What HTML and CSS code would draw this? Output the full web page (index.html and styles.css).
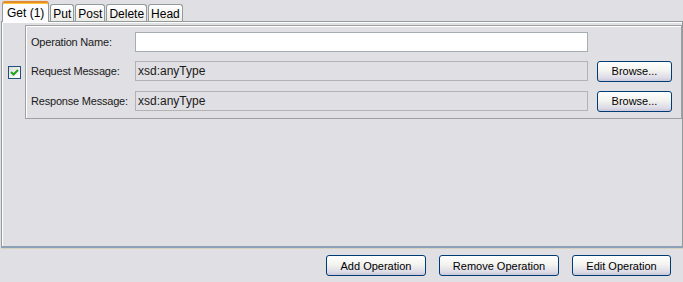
FILE: index.html
```html
<!DOCTYPE html>
<html lang="en">
<head>
    <meta charset="UTF-8">
    <title>Operations</title>
    <link rel="stylesheet" href="styles.css">
</head>
<body>
    <div class="tab-strip">
        <div class="tab selected">Get (1)</div>
        <div class="tab">Put</div>
        <div class="tab">Post</div>
        <div class="tab">Delete</div>
        <div class="tab">Head</div>
    </div>

    <div class="tab-body">
        <div class="op-row">
            <div class="check-col">
                <span class="check">
                    <svg width="11" height="11" viewBox="0 0 11 11">
                        <path d="M2 5 L4.5 7.5 L9 3" fill="none" stroke="#21a121" stroke-width="2"/>
                    </svg>
                </span>
            </div>
            <div class="op-panel">
                <label>Operation Name:</label>
                <div class="field"></div>
                <div></div>

                <label>Request Message:</label>
                <div class="field disabled">xsd:anyType</div>
                <button class="btn">Browse...</button>

                <label>Response Message:</label>
                <div class="field disabled">xsd:anyType</div>
                <button class="btn">Browse...</button>
            </div>
        </div>
    </div>

    <div class="actions">
        <button class="btn add">Add Operation</button>
        <button class="btn remove">Remove Operation</button>
        <button class="btn edit">Edit Operation</button>
    </div>
</body>
</html>
```

FILE: styles.css
```css
body {
    margin: 0;
    padding: 0;
    width: 683px;
    height: 282px;
    background-color: #e0dfe3;
    color: #000;
    font-family: "Liberation Sans", Arial, sans-serif;
    font-size: 11px;
    overflow: hidden;
}

.tab-strip {
    display: flex;
    align-items: flex-end;
    height: 21px;
    padding-left: 2px;
}

.tab {
    box-sizing: border-box;
    height: 17px;
    padding: 2px 2px 0 2px;
    margin-right: 1px;
    border: 1px solid #919b9c;
    border-bottom: none;
    border-radius: 3px 3px 0 0;
    background: linear-gradient(#ffffff, #ecebe6);
    font-size: 12px;
    line-height: 14px;
    color: #000;
}

.tab.selected {
    height: 21px;
    margin-bottom: -1px;
    padding: 3px 4px 0 4px;
    border-top: 2px solid #e68b2c;
    box-shadow: inset 0 1px 0 #ffc73c;
    background: #fcfcfe;
    position: relative;
    z-index: 1;
}

.tab-body {
    box-sizing: border-box;
    height: 227px;
    margin: 0 0 0 1px;
    border: 1px solid #919b9c;
    border-bottom: 2px solid #8ca0b8;
    box-shadow: inset 1px 1px 0 #ffffff, 0 1px 0 #d6d2c2;
    padding: 3px 0 0 2px;
}

.op-row {
    display: flex;
}

.check-col {
    flex-shrink: 0;
    width: 21px;
    display: flex;
    align-items: center;
    padding-left: 4px;
    box-sizing: border-box;
}

.check {
    box-sizing: border-box;
    width: 13px;
    height: 13px;
    border: 1px solid #1c5180;
    background: linear-gradient(135deg, #dcdcd7, #ffffff);
    display: flex;
    align-items: center;
    justify-content: center;
}

.op-panel {
    flex: 1;
    display: grid;
    grid-template-columns: 95px 453px 75px;
    column-gap: 9px;
    grid-template-rows: 20px 22px 22px;
    row-gap: 8px;
    align-items: center;
    padding: 6px 8px 6px 5px;
    border: 1px solid #a0a0a0;
    box-shadow: inset 1px 1px 0 #ffffff;
}

.op-panel label {
    color: #1a1a1a;
    white-space: nowrap;
    letter-spacing: -0.2px;
}

.field {
    box-sizing: border-box;
    height: 20px;
    padding-left: 2px;
    line-height: 18px;
    border: 1px solid #a5acb2;
    background: #ffffff;
    font-size: 12px;
}

.field.disabled {
    background: #e0dfe3;
    color: #1a1a1a;
    border-color: #b3b3b3;
}

.btn {
    box-sizing: border-box;
    height: 21px;
    padding: 0;
    border: 1px solid #003c74;
    border-radius: 3px;
    background: linear-gradient(#ffffff 0%, #f3f3ef 45%, #dcdae6 85%, #c9c7da 100%);
    font-family: "Liberation Sans", Arial, sans-serif;
    font-size: 11px;
    color: #000;
}

.actions {
    display: flex;
    justify-content: flex-end;
    gap: 13px;
    padding: 7px 12px 0 0;
}

.actions .add {
    width: 100px;
}

.actions .remove {
    width: 120px;
}

.actions .edit {
    width: 99px;
}
```
